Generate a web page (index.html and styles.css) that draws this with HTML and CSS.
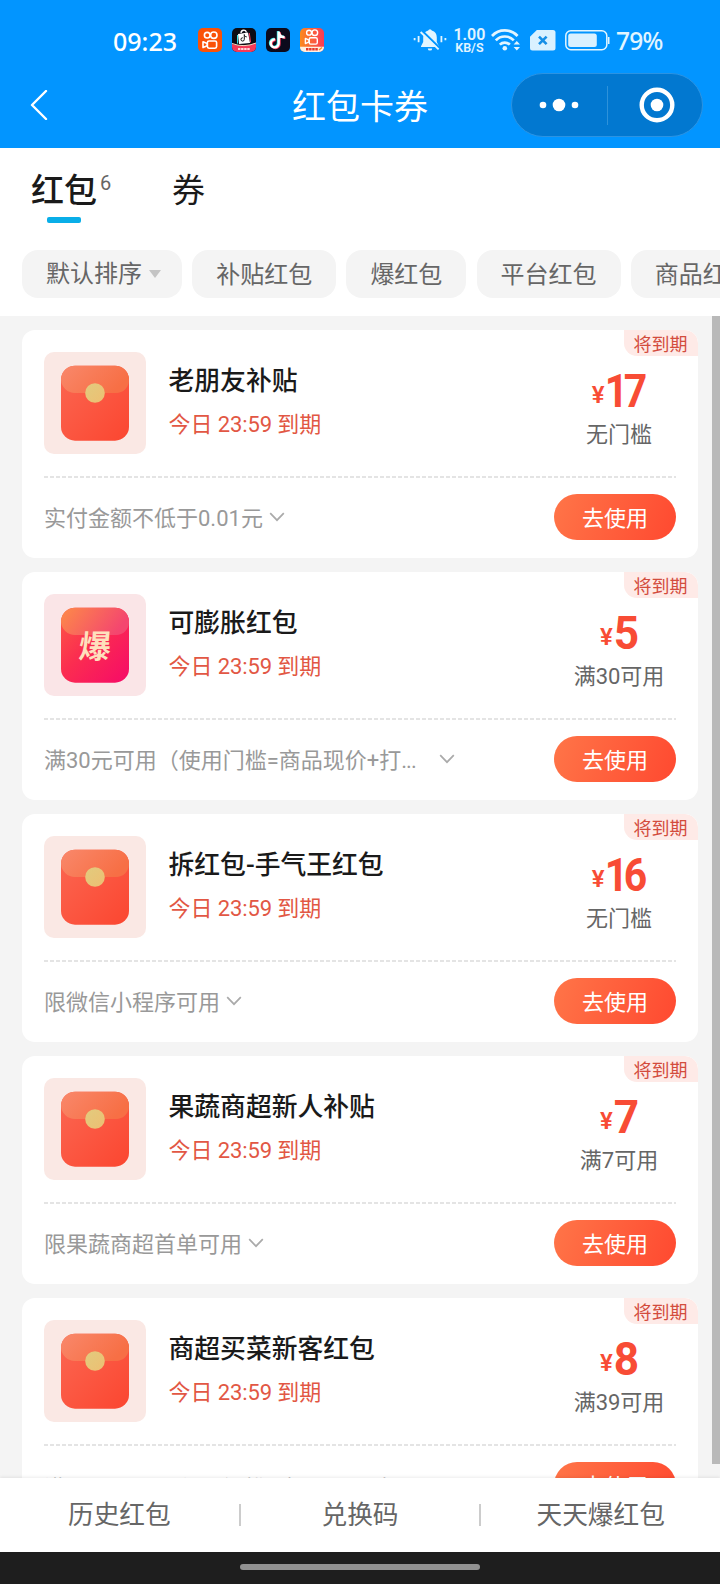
FILE: index.html
```html
<!DOCTYPE html>
<html lang="zh-CN">
<head>
<meta charset="utf-8">
<title>红包卡券</title>
<link rel="stylesheet" href="styles.css">
</head>
<body>
<svg class="defs" width="0" height="0">
  <defs>
    <linearGradient id="env" x1="0" y1="0" x2="1" y2="1"><stop offset="0" stop-color="#fb6752"/><stop offset="1" stop-color="#fb4630"/></linearGradient>
    <linearGradient id="flap" x1="0" y1="0" x2="1" y2="0.4"><stop offset="0" stop-color="#f9886b"/><stop offset="1" stop-color="#f76f45"/></linearGradient>
    <linearGradient id="boomEnv" x1="0" y1="0" x2="1" y2="1"><stop offset="0" stop-color="#fd5a44"/><stop offset="0.45" stop-color="#fb2d50"/><stop offset="1" stop-color="#f60a68"/></linearGradient>
    <linearGradient id="boomFlap" x1="0" y1="0" x2="1" y2="0.3"><stop offset="0" stop-color="#fd8b48"/><stop offset="1" stop-color="#f4466f"/></linearGradient>
    <linearGradient id="kwai" x1="0" y1="0" x2="1" y2="0"><stop offset="0" stop-color="#fb8a1e"/><stop offset="1" stop-color="#fa3a55"/></linearGradient>
    <linearGradient id="coin" x1="0" y1="0" x2="1" y2="1"><stop offset="0" stop-color="#e2cb7e"/><stop offset="1" stop-color="#edbf72"/></linearGradient>
    <symbol id="envelope" viewBox="0 0 68 76">
      <rect width="68" height="75" y=".7" rx="14" fill="url(#env)"/>
      <path d="M0 14.7A14 14 0 0 1 14 .7H54A14 14 0 0 1 68 14.7V15A13 13 0 0 1 55 28H14A14 14 0 0 1 0 15Z" fill="url(#flap)"/>
      <circle cx="34" cy="28" r="9.8" fill="url(#coin)"/>
    </symbol>
    <symbol id="envelope-boom" viewBox="0 0 68 76">
      <rect width="68" height="75" y=".7" rx="14" fill="url(#boomEnv)"/>
      <path d="M0 14.7A14 14 0 0 1 14 .7H54A14 14 0 0 1 68 14.7V15A13 13 0 0 1 55 28H14A14 14 0 0 1 0 15Z" fill="url(#boomFlap)"/>
    </symbol>
    <symbol id="down" viewBox="0 0 16 10"><path d="M1.2 1.2L8 8.2L14.8 1.2" fill="none" stroke="#aaa" stroke-width="1.7"/></symbol>
    <symbol id="camera" viewBox="0 0 24 24">
      <g fill="none" stroke="#fff" stroke-width="1.6">
        <circle cx="9.2" cy="7.2" r="2.8"/><circle cx="15.8" cy="7.2" r="3.2"/>
        <rect x="9.4" y="13" width="9.2" height="7.2" rx="1.6"/><path d="M5 13.8V19.6L9.2 17.8V15.6Z" stroke-linejoin="round"/>
      </g>
    </symbol>
    <symbol id="note" viewBox="0 0 24 24"><path d="M12.7 3.5V15.2A4 4 0 1 1 9 11.4M12.7 4C13.2 7.2 15.4 9.2 18.6 9.3" fill="none" stroke-width="2.4"/></symbol>
  </defs>
</svg>
<div class="screen">
  <header class="top">
    <div class="status">
      <span class="clock">09:23</span>
      <div class="apps">
        <svg width="24" height="24" viewBox="0 0 24 24"><rect width="24" height="24" rx="5" fill="#fa5208"/><use href="#camera" width="24" height="24"/></svg>
        <svg width="24" height="24" viewBox="0 0 24 24"><rect width="24" height="24" rx="5" fill="#0b0b14"/><path d="M0 16Q12 20 24 15V19A5 5 0 0 1 19 24H5A5 5 0 0 1 0 19Z" fill="#f53a58"/><path d="M0 15.5Q12 20 24 15" fill="none" stroke="#f9dcc0" stroke-width="1"/><path d="M6 6L16 4.5L18 15L7 16Z" fill="#fff"/><path d="M5.5 7V15.5" stroke="#35dfe4"/><path d="M17.3 5L18.6 14.5" stroke="#f53a58"/><path d="M9 5C9 1.8 14 1 14.3 4.5" fill="none" stroke="#fff" stroke-width="1.3"/><use href="#note" x="7" y="5" width="10" height="10" stroke="#111"/><path d="M6 21H18" stroke="#ffd5d5" stroke-width="1.8" stroke-dasharray="2.4 .7"/></svg>
        <svg width="24" height="24" viewBox="0 0 24 24"><rect width="24" height="24" rx="5" fill="#0c0a1c"/><use href="#note" x="-.7" y="-.5" width="24" height="24" stroke="#27e4e6"/><use href="#note" x=".8" y=".6" width="24" height="24" stroke="#f8385f"/><use href="#note" width="24" height="24" stroke="#fff"/></svg>
        <svg width="24" height="24" viewBox="0 0 24 24"><rect width="24" height="24" rx="5" fill="url(#kwai)"/><use href="#camera" x="1" y="-1.6" width="21" height="21"/><path d="M0 18.7H24V19A5 5 0 0 1 19 24H5A5 5 0 0 1 0 19Z" fill="#fff0e2"/><path d="M6 21.3H18" stroke="#e5382c" stroke-width="2.6" stroke-dasharray="2.5 .6"/><path d="M19 22L22 19.5" stroke="#f78b28" stroke-width="1.5"/></svg>
      </div>
      <div class="signals">
        <svg class="bell" width="34" height="24" viewBox="0 0 34 24">
          <path d="M17 1.2A2 2 0 0 1 18.8 2.6C22.2 3.4 23.8 6 23.8 9.5V14L26 18.2V19H8V18.2L10.2 14V9.5C10.2 6 11.8 3.4 15.2 2.6A2 2 0 0 1 17 1.2ZM14.8 20.4H19.2A2.2 2.2 0 0 1 14.8 20.4Z" fill="#e2f5ff"/>
          <path d="M9.2 3L27.2 20.5" stroke="#0295ff" stroke-width="2.4"/><path d="M7.6 4L25.6 21.4" stroke="#e2f5ff" stroke-width="1.9"/>
          <path d="M1.6 10V12.2M5.6 8V14.2M28.4 8V14.2M32.4 10V12.2" stroke="#e2f5ff" stroke-width="1.8"/>
        </svg>
        <span class="speed"><b>1.00</b><b class="unit">KB/S</b></span>
        <svg class="wifi" width="30" height="24" viewBox="0 0 30 24"><g fill="none" stroke="#e2f5ff" stroke-width="2.7"><path d="M1 8A17.5 17.5 0 0 1 26.6 8"/><path d="M4.8 12.4A12.3 12.3 0 0 1 22.8 12.4"/><path d="M8.8 16.6A7.2 7.2 0 0 1 18.8 16.6"/></g><circle cx="13.8" cy="20.3" r="2.3" fill="#e2f5ff"/><path d="M22.6 16.4L25.8 13L29 16.4ZM22.6 19L25.8 22.4L29 19Z" fill="#e2f5ff"/></svg>
        <svg class="sim" width="26" height="21" viewBox="0 0 26 21"><path d="M6.8 0H23A2.5 2.5 0 0 1 25.5 2.5V18A2.5 2.5 0 0 1 23 20.5H2.5A2.5 2.5 0 0 1 0 18V6.8Z" fill="#daf1ff"/><path d="M9 6.6L16.6 14.2M16.6 6.6L9 14.2" stroke="#168fe6" stroke-width="2.6"/></svg>
        <svg class="battery" width="45" height="21" viewBox="0 0 45 21"><rect x=".8" y=".8" width="41" height="19" rx="5" fill="none" stroke="#e2f5ff" stroke-width="1.5"/><rect x="3.2" y="3.6" width="28.6" height="13.4" rx="2.5" fill="#daf1ff"/><path d="M43.7 7V14" stroke="#e2f5ff" stroke-width="1.6"/></svg>
        <span class="percent">79%</span>
      </div>
    </div>
    <div class="nav">
      <svg class="back" width="18" height="30" viewBox="0 0 18 30"><path d="M16 1L2 15L16 29" fill="none" stroke="#fff" stroke-width="2.4" stroke-linecap="round" stroke-linejoin="round"/></svg>
      <h1 class="title">红包卡券</h1>
      <div class="capsule">
        <svg width="40" height="14" viewBox="0 0 40 14"><g fill="#fff"><circle cx="4" cy="7" r="3.3"/><circle cx="20" cy="7" r="6.3"/><circle cx="36" cy="7" r="3.3"/></g></svg>
        <span class="capsule-line"></span>
        <svg width="36" height="36" viewBox="0 0 36 36"><circle cx="18" cy="18" r="15.3" fill="none" stroke="#fff" stroke-width="4.4"/><circle cx="18" cy="18" r="6.3" fill="#fff"/></svg>
      </div>
    </div>
  </header>

  <section class="filters">
    <div class="tabs">
      <div class="tab active">红包<sup class="count">6</sup></div>
      <div class="tab">券</div>
    </div>
    <div class="chips">
      <span class="chip sort">默认排序<i class="caret"></i></span>
      <span class="chip">补贴红包</span>
      <span class="chip">爆红包</span>
      <span class="chip">平台红包</span>
      <span class="chip">商品红包</span>
    </div>
  </section>

  <main class="list">
    <article class="card">
      <span class="badge">将到期</span>
      <div class="main">
        <div class="thumb"><svg width="68" height="76"><use href="#envelope"/></svg></div>
        <div class="info"><h2 class="name">老朋友补贴</h2><p class="expire">今日 23:59 到期</p></div>
        <div class="amount"><div class="price"><span class="yen">¥</span><span class="num two">17</span></div><div class="limit">无门槛</div></div>
      </div>
      <svg class="dash" height="2"><path d="M0 1H632"/></svg>
      <div class="foot"><p class="rule">实付金额不低于0.01元</p><svg class="down" width="16" height="10"><use href="#down"/></svg><a class="use">去使用</a></div>
    </article>
    <article class="card">
      <span class="badge">将到期</span>
      <div class="main">
        <div class="thumb boom"><svg width="68" height="76"><use href="#envelope-boom"/></svg><span class="boom-text">爆</span></div>
        <div class="info"><h2 class="name">可膨胀红包</h2><p class="expire">今日 23:59 到期</p></div>
        <div class="amount"><div class="price"><span class="yen">¥</span><span class="num">5</span></div><div class="limit">满30可用</div></div>
      </div>
      <svg class="dash" height="2"><path d="M0 1H632"/></svg>
      <div class="foot"><p class="rule long">满30元可用（使用门槛=商品现价+打<span class="dots">...</span></p><svg class="down" width="16" height="10"><use href="#down"/></svg><a class="use">去使用</a></div>
    </article>
    <article class="card">
      <span class="badge">将到期</span>
      <div class="main">
        <div class="thumb"><svg width="68" height="76"><use href="#envelope"/></svg></div>
        <div class="info"><h2 class="name">拆红包-手气王红包</h2><p class="expire">今日 23:59 到期</p></div>
        <div class="amount"><div class="price"><span class="yen">¥</span><span class="num two">16</span></div><div class="limit">无门槛</div></div>
      </div>
      <svg class="dash" height="2"><path d="M0 1H632"/></svg>
      <div class="foot"><p class="rule">限微信小程序可用</p><svg class="down" width="16" height="10"><use href="#down"/></svg><a class="use">去使用</a></div>
    </article>
    <article class="card">
      <span class="badge">将到期</span>
      <div class="main">
        <div class="thumb"><svg width="68" height="76"><use href="#envelope"/></svg></div>
        <div class="info"><h2 class="name">果蔬商超新人补贴</h2><p class="expire">今日 23:59 到期</p></div>
        <div class="amount"><div class="price"><span class="yen">¥</span><span class="num">7</span></div><div class="limit">满7可用</div></div>
      </div>
      <svg class="dash" height="2"><path d="M0 1H632"/></svg>
      <div class="foot"><p class="rule">限果蔬商超首单可用</p><svg class="down" width="16" height="10"><use href="#down"/></svg><a class="use">去使用</a></div>
    </article>
    <article class="card">
      <span class="badge">将到期</span>
      <div class="main">
        <div class="thumb"><svg width="68" height="76"><use href="#envelope"/></svg></div>
        <div class="info"><h2 class="name">商超买菜新客红包</h2><p class="expire">今日 23:59 到期</p></div>
        <div class="amount"><div class="price"><span class="yen">¥</span><span class="num">8</span></div><div class="limit">满39可用</div></div>
      </div>
      <svg class="dash" height="2"><path d="M0 1H632"/></svg>
      <div class="foot last"><p class="rule long">满39元可用（使用门槛=商品现价+打<span class="dots">...</span></p><svg class="down" width="16" height="10"><use href="#down"/></svg><a class="use">去使用</a></div>
    </article>
    <span class="scrollbar"></span>
  </main>

  <nav class="links">
    <a class="link">历史红包</a>
    <a class="link">兑换码</a>
    <a class="link">天天爆红包</a>
  </nav>
  <div class="gesture"><span class="handle"></span></div>
</div>
</body>
</html>
```
FILE: styles.css
```css
* { box-sizing: border-box; margin: 0; padding: 0; }
body { font-family: Roboto, "Noto Sans CJK SC", sans-serif; background: #fff; color: #1a1a1a; }
svg { display: block; flex: none; }
.defs { position: absolute; }
.screen { width: 720px; height: 1584px; display: flex; flex-direction: column; overflow: hidden; }

.top { height: 148px; flex: none; background: #0295ff; color: #fff; }
.status { height: 72px; padding: 8px 0 0 113px; display: flex; align-items: center; }
.clock { width: 84.5px; font: 500 25px/30px "Noto Sans", sans-serif; padding-top: 1px; white-space: nowrap; }
.apps { display: flex; gap: 10.3px; }
.signals { margin-left: 89px; display: flex; align-items: center; color: #e2f5ff; }
.speed { width: 32px; margin-left: 6px; display: flex; flex-direction: column; align-items: center; font: 600 16px/14px Roboto, sans-serif; }
.speed b { font-weight: 600; }
.speed .unit { font-size: 12.5px; line-height: 11px; }
.wifi { margin-left: 6px; }
.sim { margin-left: 8.5px; }
.battery { margin-left: 9px; }
.percent { margin-left: 6px; font: 500 24.5px/30px "Noto Sans", sans-serif; letter-spacing: -.7px; padding-top: 1px; }
.nav { height: 66px; display: flex; align-items: center; padding: 0 17px 0 30px; }
.title { width: 136px; margin-left: 244px; padding-top: 3px; font-size: 34px; line-height: 40px; font-weight: 400; }
.capsule { width: 192px; height: 64px; margin-left: auto; border: 1px solid #2c93e2; border-radius: 32px; background: #0278d0; display: flex; align-items: center; padding-left: 27px; }
.capsule-line { width: 1px; height: 39px; background: #2e92da; margin: 0 31px 0 28px; }

.filters { height: 168px; flex: none; background: #fff; }
.tabs { height: 102px; padding: 19px 31px 0; display: flex; }
.tab { width: 141px; font-size: 33px; line-height: 48px; height: 56px; font-weight: 400; display: flex; align-items: flex-start; }
.active { font-weight: 500; position: relative; }
.active::after { content: ""; position: absolute; left: 16px; bottom: 0; width: 34px; height: 6px; border-radius: 2px; background: #09aee8; }
.count { margin: 4px 0 0 3px; font-size: 20px; line-height: 24px; font-weight: 400; color: #666; }
.chips { display: flex; gap: 10.2px; padding-left: 22px; overflow: hidden; }
.chip { flex: none; height: 48px; padding: 0 24px; border-radius: 16px; background: #f4f4f4; color: #666; font-size: 24px; line-height: 51px; white-space: nowrap; }
.sort { width: 160px; display: flex; align-items: center; }
.caret { margin: 0 0 1px 7px; border: 6px solid transparent; border-top: 8px solid #c4c4c4; border-bottom: 0; }

.list { flex: 1; min-height: 0; position: relative; overflow: hidden; background: #f4f4f4; padding: 14px 22px; display: flex; flex-direction: column; gap: 14px; }
.card { flex: none; height: 228px; border-radius: 13px; background: #fff; padding: 22px; position: relative; overflow: hidden; }
.badge { position: absolute; top: 0; right: 0; width: 74px; height: 26px; padding-right: 1px; border-radius: 0 13px 0 13px; background: #feeae7; color: #d34c3d; font-size: 18px; line-height: 29px; text-align: center; }
.main { display: flex; height: 124px; }
.thumb { flex: none; width: 102px; height: 102px; border-radius: 10px; background: #fae8e4; display: flex; align-items: center; justify-content: center; position: relative; }
.boom { background: #fae5e7; }
.boom-text { position: absolute; left: 35px; top: 33px; font-size: 32px; line-height: 40px; font-weight: 700; color: #fee0bd; transform: skewX(-5deg); }
.info { margin-left: 22.5px; padding-top: 11px; flex: 1; }
.name { font-size: 25.8px; line-height: 36px; font-weight: 500; }
.expire { margin-top: 8px; font-size: 22px; line-height: 36px; color: #e25744; white-space: nowrap; letter-spacing: -.1px; }
.amount { width: 114px; display: flex; flex-direction: column; align-items: center; }
.price { height: 61px; display: flex; align-items: flex-end; color: #f84c35; font-weight: 700; }
.yen { font-size: 24px; line-height: 30px; margin: 0 2px 3px 0; font-weight: 600; }
.num { font-size: 47px; line-height: 50px; margin-bottom: -3px; transform: scaleX(.94); margin-left: -2px; margin-right: -2px; }
.two { letter-spacing: -5px; transform: scaleX(.87); transform-origin: 30% 50%; margin-left: -3px; margin-right: -1px; }
.limit { margin-top: 6px; font-size: 22px; line-height: 32px; color: #666; white-space: nowrap; }
.dash { width: 632px; stroke: #dcdcdc; stroke-width: 1.5; stroke-dasharray: 4 2; }
.foot { height: 46px; margin-top: 16px; display: flex; align-items: center; }
.rule { font-size: 22px; line-height: 34px; color: #999; white-space: nowrap; padding-top: 4px; }
.long { width: 389px; }
.last .rule { padding-top: 8px; }
.dots { letter-spacing: -1px; }
.down { margin-left: 6px; }
.use { width: 122px; height: 46px; margin-left: auto; border-radius: 23px; background: linear-gradient(110deg, #ff7548, #ff4930); color: #fff; font-size: 22px; line-height: 49px; text-align: center; }
.scrollbar { position: absolute; right: 0; top: 0; width: 8px; height: 1148px; background: #b9b9b9; }

.links { flex: none; height: 74px; background: #fff; display: flex; align-items: center; box-shadow: 0 -1px 3px rgba(0, 0, 0, .08); position: relative; }
.link { flex: 1; height: 22px; font-size: 25.7px; line-height: 22px; color: #666; text-align: center; }
.link + .link { border-left: 2px solid #ccc; }
.gesture { flex: none; height: 32px; background: #1e1e1e; display: flex; justify-content: center; padding-top: 12px; }
.handle { width: 240px; height: 6px; border-radius: 3px; background: #919191; }
```
